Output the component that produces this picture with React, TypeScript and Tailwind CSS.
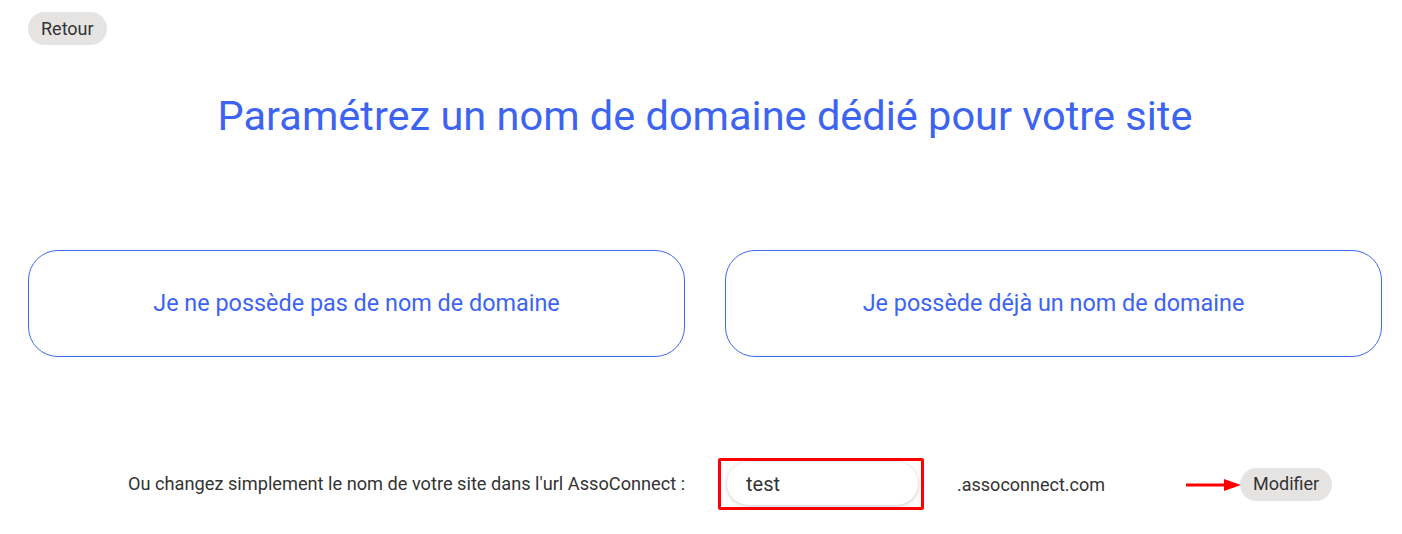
import React, { useState } from 'react';

const App: React.FC = () => {
  const [siteName, setSiteName] = useState('test');

  return (
    <div className="w-[1402px] h-[534px] bg-white pl-[28px] pt-[12px] font-['Roboto','Liberation_Sans',sans-serif] text-[#333333]">
      <div className="w-[1354px]">
        <button className="h-[33px] px-[13px] rounded-full bg-[#e6e4e3] text-[18px] leading-none text-[#333333]">
          Retour
        </button>

        <h1 className="mt-[47px] text-center text-[41.5px] leading-[48px] text-[#3d63f2]">
          Paramétrez un nom de domaine dédié pour votre site
        </h1>

        <div className="mt-[110px] grid grid-cols-2 gap-[40px]">
          <button className="h-[107px] rounded-[30px] border border-[#3d6af0] text-[23.4px] text-[#3d63f2]">
            Je ne possède pas de nom de domaine
          </button>
          <button className="h-[107px] rounded-[30px] border border-[#3d6af0] text-[23.4px] text-[#3d63f2]">
            Je possède déjà un nom de domaine
          </button>
        </div>

        <div className="mt-[101px] flex items-center text-[18px]">
          <span className="ml-[100px] w-[590px] text-[18.2px]">Ou changez simplement le nom de votre site dans l'url AssoConnect :</span>
          <div className="border-[3px] border-[#ff0000] rounded-[2px] pt-[1px] pb-[2px] pl-[6px] pr-[3px]">
            <input
              value={siteName}
              onChange={(e) => setSiteName(e.target.value)}
              className="block w-[191px] h-[43px] rounded-full bg-white px-[19px] text-[20px] text-[#333333] outline-none shadow-[0_1px_4px_rgba(0,0,0,0.22)]"
            />
          </div>
          <span className="ml-[33px] w-[229px]">.assoconnect.com</span>
          <svg width="56" height="14" viewBox="0 0 56 14" className="mt-[2px]">
            <line x1="1" y1="7" x2="40" y2="7" stroke="#ff0000" strokeWidth="3" strokeLinecap="round" />
            <polygon points="38,1 55,7 38,13" fill="#ff0000" />
          </svg>
          <button className="-ml-[2px] h-[33px] px-[13px] rounded-full bg-[#e6e4e3] text-[18px] leading-none text-[#333333]">
            Modifier
          </button>
        </div>
      </div>
    </div>
  );
};

export default App;
